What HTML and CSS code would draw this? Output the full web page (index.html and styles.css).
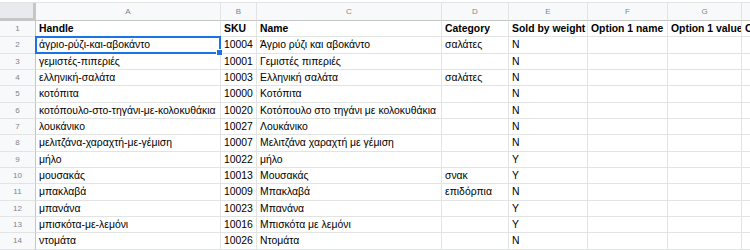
FILE: index.html
```html
<!DOCTYPE html>
<html>
<head>
<meta charset="utf-8">
<link rel="stylesheet" href="styles.css">
</head>
<body>
<div class="sheet">
  <div class="corner"></div>
  <div class="ch">A</div><div class="ch">B</div><div class="ch">C</div><div class="ch">D</div><div class="ch">E</div><div class="ch">F</div><div class="ch">G</div><div class="ch"></div>

  <div class="rh">1</div><div class="c b">Handle</div><div class="c b">SKU</div><div class="c b">Name</div><div class="c b">Category</div><div class="c b">Sold by weight</div><div class="c b">Option 1 name</div><div class="c b">Option 1 value</div><div class="c b">Option 2 name</div>

  <div class="rh">2</div><div class="c sel">άγριο-ρύζι-και-αβοκάντο</div><div class="c">10004</div><div class="c">Άγριο ρύζι και αβοκάντο</div><div class="c">σαλάτες</div><div class="c">N</div><div class="c"></div><div class="c"></div><div class="c"></div>

  <div class="rh">3</div><div class="c">γεμιστές-πιπεριές</div><div class="c">10001</div><div class="c">Γεμιστές πιπεριές</div><div class="c"></div><div class="c">N</div><div class="c"></div><div class="c"></div><div class="c"></div>

  <div class="rh">4</div><div class="c">ελληνική-σαλάτα</div><div class="c">10003</div><div class="c">Ελληνική σαλάτα</div><div class="c">σαλάτες</div><div class="c">N</div><div class="c"></div><div class="c"></div><div class="c"></div>

  <div class="rh">5</div><div class="c">κοτόπιτα</div><div class="c">10000</div><div class="c">Κοτόπιτα</div><div class="c"></div><div class="c">N</div><div class="c"></div><div class="c"></div><div class="c"></div>

  <div class="rh">6</div><div class="c">κοτόπουλο-στο-τηγάνι-με-κολοκυθάκια</div><div class="c">10020</div><div class="c">Κοτόπουλο στο τηγάνι με κολοκυθάκια</div><div class="c"></div><div class="c">N</div><div class="c"></div><div class="c"></div><div class="c"></div>

  <div class="rh">7</div><div class="c">λουκάνικο</div><div class="c">10027</div><div class="c">Λουκάνικο</div><div class="c"></div><div class="c">N</div><div class="c"></div><div class="c"></div><div class="c"></div>

  <div class="rh">8</div><div class="c">μελιτζάνα-χαραχτή-με-γέμιση</div><div class="c">10007</div><div class="c">Μελιτζάνα χαραχτή με γέμιση</div><div class="c"></div><div class="c">N</div><div class="c"></div><div class="c"></div><div class="c"></div>

  <div class="rh">9</div><div class="c">μήλο</div><div class="c">10022</div><div class="c">μήλο</div><div class="c"></div><div class="c">Y</div><div class="c"></div><div class="c"></div><div class="c"></div>

  <div class="rh">10</div><div class="c">μουσακάς</div><div class="c">10013</div><div class="c">Μουσακάς</div><div class="c">σνακ</div><div class="c">Y</div><div class="c"></div><div class="c"></div><div class="c"></div>

  <div class="rh">11</div><div class="c">μπακλαβά</div><div class="c">10009</div><div class="c">Μπακλαβά</div><div class="c">επιδόρπια</div><div class="c">N</div><div class="c"></div><div class="c"></div><div class="c"></div>

  <div class="rh">12</div><div class="c">μπανάνα</div><div class="c">10023</div><div class="c">Μπανάνα</div><div class="c"></div><div class="c">Y</div><div class="c"></div><div class="c"></div><div class="c"></div>

  <div class="rh">13</div><div class="c">μπισκότα-με-λεμόνι</div><div class="c">10016</div><div class="c">Μπισκότα με λεμόνι</div><div class="c"></div><div class="c">Y</div><div class="c"></div><div class="c"></div><div class="c"></div>

  <div class="rh">14</div><div class="c">ντομάτα</div><div class="c">10026</div><div class="c">Ντομάτα</div><div class="c"></div><div class="c">N</div><div class="c"></div><div class="c"></div><div class="c"></div>
</div>
</body>
</html>
```
FILE: styles.css
```css
html, body {
  margin: 0;
  padding: 0;
  background: #fff;
  overflow: hidden;
}
body {
  padding-top: 2px;
  font-family: "Liberation Sans", Arial, sans-serif;
}
.sheet {
  display: grid;
  grid-template-columns: 36px 185px 36px 185px 67px 79px 80px 74px 100px;
  grid-template-rows: 18px repeat(14, 16.33px);
  width: 842px;
  border-top: 1px solid #e2e3e3;
}
.corner {
  background: #e8eaed;
  border-right: 3px solid #c4c7c5;
  border-bottom: 3px solid #c4c7c5;
  box-sizing: border-box;
}
.ch {
  background: #f8f9fa;
  color: #80868b;
  font-size: 8px;
  display: flex;
  align-items: center;
  justify-content: center;
  border-right: 1px solid #e2e3e3;
  border-bottom: 1px solid #c4c7c5;
  box-sizing: border-box;
}
.rh {
  background: #f8f9fa;
  color: #80868b;
  font-size: 8px;
  display: flex;
  align-items: center;
  justify-content: center;
  border-right: 1px solid #c4c7c5;
  border-bottom: 1px solid #e2e3e3;
  box-sizing: border-box;
}
.c {
  font-size: 10.4px;
  color: #000;
  padding: 0 3px;
  display: flex;
  align-items: center;
  white-space: nowrap;
  overflow: hidden;
  border-right: 1px solid #e2e3e3;
  border-bottom: 1px solid #e2e3e3;
  box-sizing: border-box;
}
.b {
  font-weight: bold;
}
.sel {
  position: relative;
  overflow: visible;
}
.sel::before {
  content: "";
  position: absolute;
  left: -1px;
  top: -1px;
  right: -1px;
  bottom: -1px;
  border: 2px solid #1a73e8;
  pointer-events: none;
}
.sel::after {
  content: "";
  position: absolute;
  right: -3px;
  bottom: -3px;
  width: 5px;
  height: 5px;
  background: #1a73e8;
  border: 1px solid #fff;
}
```
